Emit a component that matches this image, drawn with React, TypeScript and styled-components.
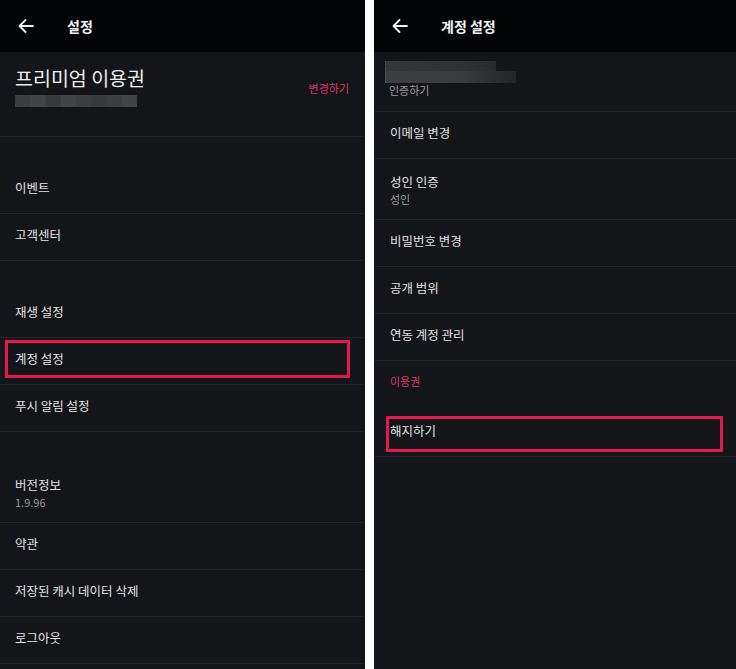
import { FC } from "react";
import styled, { createGlobalStyle } from "styled-components";

const GlobalStyle = createGlobalStyle`
    body {
        margin: 0;
        background: #ffffff;
        font-family: "Noto Sans CJK KR", "Noto Sans", sans-serif;
    }
`;

const Page = styled.div`
    display: flex;
    gap: 9px;
    width: 736px;
    height: 669px;
    overflow: hidden;
    background: #ffffff;
`;

const Screen = styled.div<{ $width: number }>`
    width: ${({ $width }) => $width}px;
    flex-shrink: 0;
    display: flex;
    flex-direction: column;
    background: #141518;
    color: #e2e2e4;
`;

const Header = styled.div`
    height: 52px;
    flex-shrink: 0;
    display: flex;
    align-items: center;
    padding-left: 18px;
    background: #030405;

    svg {
        width: 16px;
        height: 14px;
    }

    span {
        margin-left: 33px;
        font-size: 14px;
        font-weight: 700;
        color: #f2f2f2;
        line-height: 20px;
    }
`;

const Premium = styled.div`
    height: 85px;
    display: flex;
    justify-content: space-between;
    align-items: flex-start;
    padding: 13px 16px 0 15px;
    border-bottom: 1px solid #232428;
    box-sizing: border-box;
`;

const PremiumInfo = styled.div`
    display: flex;
    flex-direction: column;
    gap: 4px;

    strong {
        font-size: 19.5px;
        font-weight: 400;
        line-height: 26px;
        color: #ededee;
    }
`;

const ChangeLink = styled.span`
    margin-top: 15px;
    font-size: 11px;
    line-height: 16px;
    color: #d6396a;
`;

const Masked = styled.div<{ $width: number; $height: number }>`
    display: flex;
    width: ${({ $width }) => $width}px;
    height: ${({ $height }) => $height}px;

    i {
        flex: 1;
        background: #3c3d40;
    }

    i:nth-child(2n) {
        background: #424346;
    }

    i:nth-child(3n) {
        background: #38393c;
    }
`;

const Account = styled.div`
    padding: 9px 16px 14px 11px;
    border-bottom: 1px solid #232428;
    display: flex;
    flex-direction: column;

    span {
        padding-left: 4px;
        font-size: 11px;
        line-height: 14px;
        color: #9b9ca0;
    }
`;

const AccountMask = styled.div`
    display: flex;
    flex-direction: column;
    height: 22px;
    border-left: 1px solid #4a4b4e;

    div:first-child {
        width: 110px;
        height: 10px;
        background: linear-gradient(90deg, #35363a, #303135 70%, #2a2b2e);
    }

    div:last-child {
        width: 130px;
        height: 12px;
        background: linear-gradient(90deg, #3e3f42, #393a3d 60%, #232427);
    }
`;

const Spacer = styled.div`
    height: 30px;
    flex-shrink: 0;
`;

const Row = styled.div<{ $pad: number; $double?: boolean }>`
    position: relative;
    padding: ${({ $double }) => ($double ? "13px" : "11px")} ${({ $pad }) => $pad}px
        ${({ $double }) => ($double ? "12px" : "16px")};
    border-bottom: 1px solid #232428;
    font-size: 12.5px;
    line-height: 19px;
    color: #e2e2e4;
`;

const Sub = styled.div`
    font-size: 11px;
    line-height: 16px;
    color: #9a9b9f;
`;

const SectionTitle = styled.div`
    padding: 11px 16px 19px;
    font-size: 11px;
    line-height: 19px;
    color: #d6396a;
`;

const Highlight = styled.div<{ $top: number; $left: number; $width: number; $height: number }>`
    position: absolute;
    top: ${({ $top }) => $top}px;
    left: ${({ $left }) => $left}px;
    width: ${({ $width }) => $width}px;
    height: ${({ $height }) => $height}px;
    border: 3px solid #e3184e;
    box-sizing: border-box;
    border-radius: 1px;
`;

const BackArrow: FC = () => (
    <svg viewBox="0 0 16 14" fill="none" stroke="#f4f4f4" strokeWidth="1.8" strokeLinecap="round" strokeLinejoin="round">
        <path d="M15 7H1.5M7.5 1L1.5 7l6 6" />
    </svg>
);

type Item = { label: string; sub?: string; marked?: boolean };
type Box = { top: number; left: number; width: number; height: number };

const MenuRow: FC<{ item: Item; pad: number; box?: Box }> = ({ item, pad, box }) => (
    <Row $pad={pad} $double={!!item.sub}>
        {item.label}
        {item.sub && <Sub>{item.sub}</Sub>}
        {item.marked && box && <Highlight $top={box.top} $left={box.left} $width={box.width} $height={box.height} />}
    </Row>
);

const groups: Item[][] = [
    [{ label: "이벤트" }, { label: "고객센터" }],
    [{ label: "재생 설정" }, { label: "계정 설정", marked: true }, { label: "푸시 알림 설정" }],
    [{ label: "버전정보", sub: "1.9.96" }, { label: "약관" }, { label: "저장된 캐시 데이터 삭제" }, { label: "로그아웃" }],
];

const accountItems: Item[] = [
    { label: "이메일 변경" },
    { label: "성인 인증", sub: "성인" },
    { label: "비밀번호 변경" },
    { label: "공개 범위" },
    { label: "연동 계정 관리" },
];

const Settings: FC = () => (
    <Screen $width={365}>
        <Header>
            <BackArrow />
            <span>설정</span>
        </Header>
        <Premium>
            <PremiumInfo>
                <strong>프리미엄 이용권</strong>
                <Masked $width={122} $height={12}>
                    <i /><i /><i /><i /><i /><i /><i /><i />
                </Masked>
            </PremiumInfo>
            <ChangeLink>변경하기</ChangeLink>
        </Premium>
        {groups.map((group, gi) => (
            <div key={gi}>
                <Spacer />
                {group.map((item) => (
                    <MenuRow key={item.label} item={item} pad={15} box={{ top: 2, left: 5, width: 345, height: 38 }} />
                ))}
            </div>
        ))}
    </Screen>
);

const AccountSettings: FC = () => (
    <Screen $width={362}>
        <Header>
            <BackArrow />
            <span>계정 설정</span>
        </Header>
        <Account>
            <AccountMask>
                <div />
                <div />
            </AccountMask>
            <span>인증하기</span>
        </Account>
        {accountItems.map((item) => (
            <MenuRow key={item.label} item={item} pad={16} />
        ))}
        <SectionTitle>이용권</SectionTitle>
        <MenuRow
            item={{ label: "해지하기", marked: true }}
            pad={16}
            box={{ top: 6, left: 12, width: 337, height: 36 }}
        />
    </Screen>
);

const App: FC = () => (
    <>
        <GlobalStyle />
        <Page>
            <Settings />
            <AccountSettings />
        </Page>
    </>
);

export default App;
